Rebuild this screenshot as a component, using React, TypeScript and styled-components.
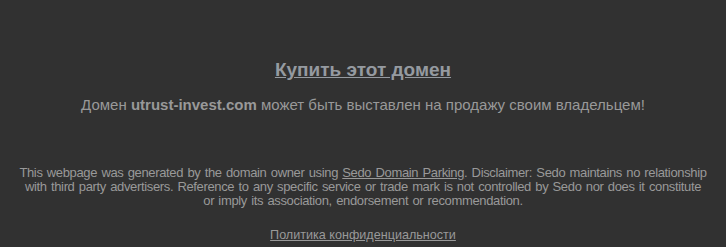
import styled, { createGlobalStyle } from "styled-components";

const GlobalStyle = createGlobalStyle`
  html, body {
    margin: 0;
    padding: 0;
    background: #313131;
  }
  body {
    font-family: "Liberation Sans", Arial, sans-serif;
    color: #999999;
  }
`;

const Page = styled.main`
  width: 726px;
  height: 247px;
  display: flex;
  flex-direction: column;
  align-items: center;
  text-align: center;
  overflow: hidden;
`;

const Offer = styled.section`
  padding-top: 58px;
  display: flex;
  flex-direction: column;
  align-items: center;
`;

const BuyLink = styled.a`
  font-size: 19px;
  font-weight: bold;
  line-height: 23px;
  color: #959aa0;
  text-decoration: underline;
`;

const Notice = styled.p`
  margin: 15px 0 0;
  font-size: 15px;
  line-height: 18px;
  color: #999999;

  strong {
    font-weight: bold;
  }
`;

const Footer = styled.footer`
  margin-top: 52px;
  display: flex;
  flex-direction: column;
  align-items: center;
`;

const Disclaimer = styled.p`
  margin: 0;
  width: 690px;
  font-size: 13px;
  letter-spacing: -0.35px;
  word-spacing: 1px;
  line-height: 14px;
  color: #999999;

  a {
    color: #999999;
    text-decoration: underline;
  }
`;

const PrivacyLink = styled.a`
  margin-top: 20px;
  font-size: 12.6px;
  line-height: 14px;
  color: #999999;
  text-decoration: underline;
`;

export default function App() {
  return (
    <>
      <GlobalStyle />
      <Page>
        <Offer>
          <BuyLink href="#">Купить этот домен</BuyLink>
          <Notice>
            Домен <strong>utrust-invest.com</strong> может быть выставлен на
            продажу своим владельцем!
          </Notice>
        </Offer>
        <Footer>
          <Disclaimer>
            This webpage was generated by the domain owner using{" "}
            <a href="#">Sedo Domain Parking</a>. Disclaimer: Sedo maintains no
            relationship with third party advertisers. Reference to any specific
            service or trade mark is not controlled by Sedo nor does it
            constitute or imply its association, endorsement or recommendation.
          </Disclaimer>
          <PrivacyLink href="#">Политика конфиденциальности</PrivacyLink>
        </Footer>
      </Page>
    </>
  );
}
